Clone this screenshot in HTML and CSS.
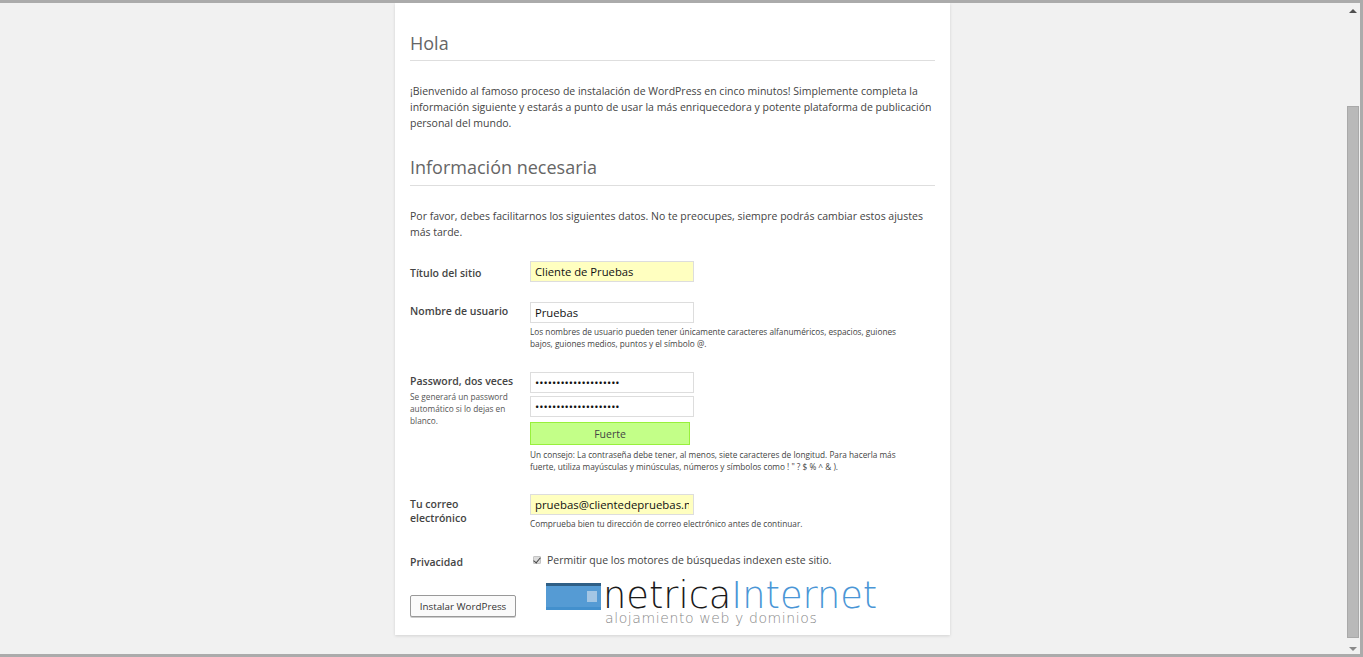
FILE: index.html
```
<!DOCTYPE html>
<html lang="es">
<head>
<meta charset="utf-8">
<title>WordPress › Instalación</title>
<link rel="stylesheet" href="styles.css">
</head>
<body>
<div class="window">
  <div class="viewport">
    <main class="card">
      <h1 class="heading">Hola</h1>
      <p class="para">¡Bienvenido al famoso proceso de instalación de WordPress en cinco minutos! Simplemente completa la información siguiente y estarás a punto de usar la más enriquecedora y potente plataforma de publicación personal del mundo.</p>
      <h1 class="heading heading-second">Información necesaria</h1>
      <p class="para para-second">Por favor, debes facilitarnos los siguientes datos. No te preocupes, siempre podrás cambiar estos ajustes más tarde.</p>
      <form class="form">
        <div class="row row-title">
          <div class="label label-title">Título del sitio</div>
          <div class="field"><input class="input input-fill" type="text" value="Cliente de Pruebas"></div>
        </div>
        <div class="row row-user">
          <div class="label label-user">Nombre de usuario</div>
          <div class="field">
            <input class="input" type="text" value="Pruebas">
            <p class="hint">Los nombres de usuario pueden tener únicamente caracteres alfanuméricos, espacios, guiones bajos, guiones medios, puntos y el símbolo @.</p>
          </div>
        </div>
        <div class="row row-pass">
          <div class="label label-pass">Password, dos veces
            <p class="label-hint">Se generará un password automático si lo dejas en blanco.</p>
          </div>
          <div class="field">
            <input class="input input-pass" type="password" value="aaaaaaaaaaaaaaaaaaaa">
            <input class="input input-pass" type="password" value="aaaaaaaaaaaaaaaaaaaa">
            <div class="strength">Fuerte</div>
            <p class="hint hint-pass">Un consejo: La contraseña debe tener, al menos, siete caracteres de longitud. Para hacerla más fuerte, utiliza mayúsculas y minúsculas, números y símbolos como ! " ? $ % ^ &amp; ).</p>
          </div>
        </div>
        <div class="row row-mail">
          <div class="label label-mail">Tu correo<br>electrónico</div>
          <div class="field">
            <input class="input input-fill input-mail" type="text" value="pruebas@clientedepruebas.net">
            <p class="hint hint-mail">Comprueba bien tu dirección de correo electrónico antes de continuar.</p>
          </div>
        </div>
        <div class="row row-priv">
          <div class="label label-priv">Privacidad</div>
          <label class="check"><input class="checkbox" type="checkbox" checked>Permitir que los motores de búsquedas indexen este sitio.</label>
        </div>
        <div class="row-submit">
          <button class="button" type="button">Instalar WordPress</button>
          <div class="logo">
            <svg class="logo-mark" width="55" height="27" viewBox="0 0 55 27" aria-hidden="true">
              <rect width="55" height="27" fill="#559bd4"/>
              <rect width="55" height="3" fill="#2f5f86"/>
              <rect y="24" width="55" height="3" fill="#4390cd"/>
              <rect x="41" y="8" width="10" height="11" fill="#a3c6e4"/>
            </svg>
            <div class="logo-text">
              <div class="logo-name">netrica<span class="logo-accent">Internet</span></div>
              <div class="logo-tag">alojamiento web y dominios</div>
            </div>
          </div>
        </div>
      </form>
    </main>
  </div>
  <div class="scrollbar">
    <span class="arrow arrow-up"></span>
    <div class="track"><div class="thumb"></div></div>
    <span class="arrow arrow-down"></span>
  </div>
</div>
</body>
</html>
```
FILE: styles.css
```
* { box-sizing: border-box; }
html, body { margin: 0; height: 100%; overflow: hidden; }
body { background: #f1f1f1; font-family: "Open Sans", sans-serif; color: #444; font-size: 10.5px; }
.window { height: 657px; display: flex; border-top: 3px solid #ababab; border-bottom: 3px solid #ababab; border-right: 3px solid #ababab; background: #f1f1f1; }
.viewport { flex: 1; overflow: hidden; min-width: 0; }
.card { width: 555px; height: 632px; margin: 0 auto; background: #fff; padding: 29px 15px 0; box-shadow: 0 1px 3px rgba(0,0,0,.13); }
.heading { margin: 0; font-size: 18px; line-height: 22px; font-weight: 400; color: #666; border-bottom: 1px solid #dedede; height: 29px; }
.heading-second { margin-top: 25px; height: 30px; }
.para { margin: 22px 0 0; font-size: 10.5px; line-height: 16px; color: #444; }
.para-second { margin-top: 22px; }
.form { display: block; }
.row { display: flex; }
.label { width: 120px; flex: none; font-size: 10.5px; font-weight: 600; line-height: 14px; color: #444; }
.field { flex: none; width: 370px; }
.row-title { margin-top: 21px; }
.label-title { padding-top: 5px; }
.label-user { padding-top: 2px; }
.label-pass { padding-top: 2px; }
.row-user { margin-top: 20px; }
.row-pass { margin-top: 22px; }
.row-mail { margin-top: 21px; }
.row-priv { margin-top: 23px; }
.label-priv { padding-top: 2px; }
.label-mail { padding-top: 3px; }
.input { display: block; width: 164px; height: 21px; border: 1px solid #ddd; background: #fff; padding: 0 4px; font: 11.25px/19px "Open Sans", sans-serif; color: #111; outline: 0; border-radius: 0; }
.input-fill { background: #ffffc0; }
.input-mail { font-size: 11.4px; }
.input-pass { margin-bottom: 3px; }
.hint { margin: 3px 0 0; font-size: 8.25px; line-height: 12px; color: #444; }
.hint-pass { margin-top: 4px; }
.label-hint { margin: 3px 0 0; font-size: 8.25px; line-height: 12px; font-weight: 400; color: #555; width: 105px; }
.strength { width: 160px; height: 23px; margin-top: 5px; background: #c3ff88; border: 1px solid #98f03c; text-align: center; font-size: 10.5px; line-height: 23px; color: #444; }
.check { display: flex; align-items: center; align-self: flex-start; margin-top: -1px; font-size: 10.5px; line-height: 16px; color: #444; padding-left: 3px; }
.checkbox { appearance: none; position: relative; width: 8px; height: 8px; margin: 0 6px 0 0; background: #dcdcdc; border: 1px solid #c4c4c4; border-radius: 1px; }
.checkbox::after { content: ""; position: absolute; left: 1px; top: -1px; width: 3px; height: 6px; border: solid #444; border-width: 0 1.5px 1.5px 0; transform: rotate(40deg); }
.row-submit { display: flex; margin-top: 14px; }
.button { width: 106px; height: 22px; margin-top: 12px; border: 1px solid #999; border-radius: 2px; background: #fafafa; font: 9.8px/20px "Open Sans", sans-serif; color: #333; padding: 1px 0 0; box-shadow: 0 1px 0 #ccc; }
.logo { display: flex; margin-left: 30px; align-items: flex-start; }
.logo-mark { flex: none; }
.logo-text { margin-left: 2px; margin-top: -3px; }
.logo-name { font-family: "DejaVu Sans", sans-serif; font-weight: 200; font-size: 36.75px; line-height: 31px; color: #1a1a1a; white-space: nowrap; }
.logo-accent { color: #4a96d6; }
.logo-tag { font-family: "DejaVu Sans", sans-serif; font-weight: 200; font-size: 14px; line-height: 14px; color: #888; letter-spacing: .6px; white-space: nowrap; padding-left: 2px; }
.scrollbar { width: 15px; display: flex; flex-direction: column; align-items: center; position: relative; }
.track { flex: 1; width: 100%; position: relative; padding: 103px 1px 0 2px; }
.thumb { width: 12px; height: 532px; background: #b9b9b9; border: 1px solid #a9a9a9; }
.arrow { position: absolute; width: 0; height: 0; border-left: 4px solid transparent; border-right: 4px solid transparent; }
.arrow-up { top: 6px; border-bottom: 4px solid #505050; }
.arrow-down { bottom: 3px; border-top: 4px solid #8a8a8a; }
```
